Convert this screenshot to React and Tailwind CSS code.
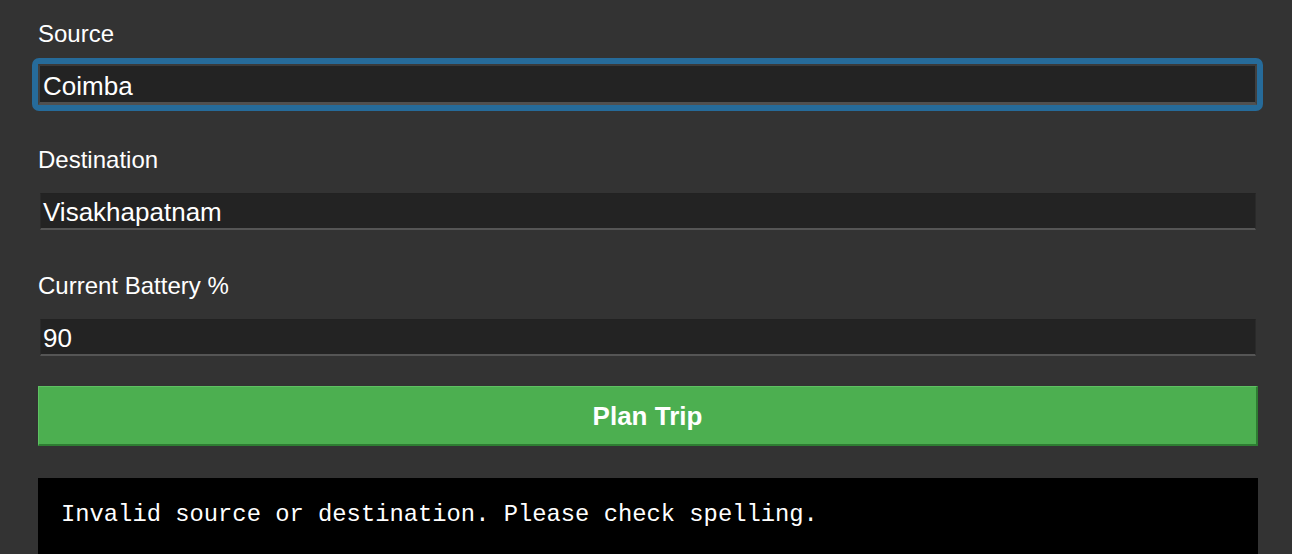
import React from "react";

const sans = { fontFamily: '"Liberation Sans", Arial, sans-serif' };

export default function App() {
  return (
    <div
      className="h-[554px] w-[1292px] overflow-hidden bg-[#333333] text-white"
      style={sans}
    >
      <div className="flex flex-col pl-[38px] pt-[19px]">
        <label className="h-[28px] pt-[1px] text-[24px] leading-[28px] text-white">Source</label>
        <div className="ml-[-6px] mt-[11px] h-[53px] w-[1231px] rounded-[7px] bg-[#266b9a] p-[6px]">
          <div className="flex h-[41px] w-[1219px] items-center border-x-2 border-t-2 border-b-[3px] border-x-[#404040] border-t-[#3a3a3a] border-b-[#505050] bg-[#232323] pl-[3px] pt-[3px] text-[26px] leading-none text-white">
            Coimba
          </div>
        </div>

        <label className="mt-[35px] h-[28px] text-[24px] leading-[28px] text-white">Destination</label>
        <div className="ml-[2px] mt-[19px] flex h-[37px] w-[1216px] items-center border-x border-t border-b-2 border-x-[#2a2a2a] border-t-[#222222] border-b-[#555555] bg-[#232323] pl-[2px] pt-[2px] text-[26px] leading-none text-white">
          Visakhapatnam
        </div>

        <label className="mt-[42px] h-[28px] text-[24px] leading-[28px] text-white">Current Battery %</label>
        <div className="ml-[2px] mt-[19px] flex h-[37px] w-[1216px] items-center border-x border-t border-b-2 border-x-[#2a2a2a] border-t-[#222222] border-b-[#555555] bg-[#232323] pl-[2px] pt-[2px] text-[26px] leading-none text-white">
          90
        </div>

        <button className="mt-[30px] flex h-[60px] w-[1220px] items-center justify-center border-l border-t border-b-2 border-r-2 border-l-[#5fc163] border-t-[#5fc163] border-b-[#2e7d32] border-r-[#2e7d32] bg-[#4caf50] pt-[2px] text-[26px] font-bold text-white">
          Plan Trip
        </button>

        <div
          className="mt-[32px] w-[1220px] bg-black pb-[40px] pl-[23px] pt-[23px] text-[23.8px] text-white"
          style={{ fontFamily: '"Liberation Mono", "Courier New", monospace', lineHeight: "normal" }}
        >
          Invalid source or destination. Please check spelling.
        </div>
      </div>
    </div>
  );
}
